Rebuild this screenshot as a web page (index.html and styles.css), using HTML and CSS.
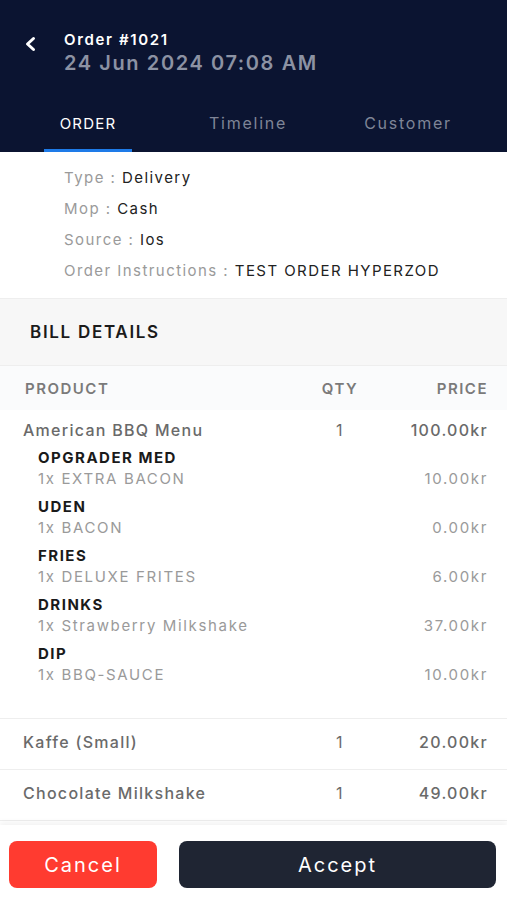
FILE: index.html
```html
<!DOCTYPE html>
<html lang="en">

<head>
    <meta charset="UTF-8">
    <meta name="viewport" content="width=device-width, initial-scale=1.0">
    <title>Order #1021</title>
    <link rel="stylesheet" href="styles.css">
</head>

<body>
    <div class="page">
        <header class="top">
            <div class="title-row">
                <span class="back">
                    <svg width="14" height="16" viewBox="0 0 14 16">
                        <path d="M9.5 2.5 L3.5 8 L9.5 13.5" fill="none" stroke="#fff" stroke-width="3" stroke-linecap="round" stroke-linejoin="round" />
                    </svg>
                </span>
                <div class="titles">
                    <div class="order-no">Order #1021</div>
                    <div class="order-date">24 Jun 2024 07:08 AM</div>
                </div>
            </div>
            <nav class="tabs">
                <div class="tab active"><span>ORDER</span></div>
                <div class="tab"><span>Timeline</span></div>
                <div class="tab"><span>Customer</span></div>
            </nav>
        </header>

        <section class="info">
            <div class="info-row"><span class="lbl">Type : </span>Delivery</div>
            <div class="info-row"><span class="lbl">Mop : </span>Cash</div>
            <div class="info-row"><span class="lbl">Source : </span>Ios</div>
            <div class="info-row"><span class="lbl">Order Instructions : </span>TEST ORDER HYPERZOD</div>
        </section>

        <div class="bill-title">BILL DETAILS</div>

        <div class="bill-head">
            <span>PRODUCT</span>
            <span class="qty">QTY</span>
            <span class="price">PRICE</span>
        </div>

        <div class="item">
            <div class="line">
                <span>American BBQ Menu</span>
                <span class="qty">1</span>
                <span class="price">100.00kr</span>
            </div>
            <div class="addon">
                <div class="addon-name">OPGRADER MED</div>
                <div class="addon-line"><span>1x EXTRA BACON</span><span>10.00kr</span></div>
            </div>
            <div class="addon">
                <div class="addon-name">UDEN</div>
                <div class="addon-line"><span>1x BACON</span><span>0.00kr</span></div>
            </div>
            <div class="addon">
                <div class="addon-name">FRIES</div>
                <div class="addon-line"><span>1x DELUXE FRITES</span><span>6.00kr</span></div>
            </div>
            <div class="addon">
                <div class="addon-name">DRINKS</div>
                <div class="addon-line"><span>1x Strawberry Milkshake</span><span>37.00kr</span></div>
            </div>
            <div class="addon">
                <div class="addon-name">DIP</div>
                <div class="addon-line"><span>1x BBQ-SAUCE</span><span>10.00kr</span></div>
            </div>
        </div>

        <div class="item simple">
            <div class="line">
                <span>Kaffe (Small)</span>
                <span class="qty">1</span>
                <span class="price">20.00kr</span>
            </div>
        </div>

        <div class="item simple">
            <div class="line">
                <span>Chocolate Milkshake</span>
                <span class="qty">1</span>
                <span class="price">49.00kr</span>
            </div>
        </div>

        <footer class="actions">
            <button class="btn cancel">Cancel</button>
            <button class="btn accept">Accept</button>
        </footer>
    </div>
</body>

</html>
```

FILE: styles.css
```css
* {
    padding: 0;
    margin: 0;
    box-sizing: border-box;
}

body {
    font-family: "Inter", "DejaVu Sans", sans-serif;
    background: #fff;
    color: #222;
    letter-spacing: 0.09em;
}

.page {
    width: 507px;
    height: 900px;
    overflow: hidden;
    display: flex;
    flex-direction: column;
}

/* header */
.top {
    background: #0b1431;
    height: 152px;
    padding-top: 30px;
}

.title-row {
    display: flex;
    align-items: flex-start;
    padding-left: 24px;
}

.back {
    width: 40px;
    padding-top: 6px;
}

.order-no {
    color: #fff;
    font-size: 15px;
    font-weight: 600;
    line-height: 20px;
    letter-spacing: 0.11em;
}

.order-date {
    color: #8c92a3;
    font-size: 20px;
    font-weight: 600;
    line-height: 26px;
    letter-spacing: 0.08em;
}

.tabs {
    display: grid;
    grid-template-columns: 160px 160px 160px;
    margin-top: 37px;
    padding-left: 8px;
}

.tab {
    text-align: center;
    font-size: 16px;
    color: #7f8597;
    line-height: 20px;
    letter-spacing: 0.11em;
}

.tab span {
    display: inline-block;
    padding: 0 16px 15px;
    border-bottom: 3px solid transparent;
}

.tab.active span {
    color: #fff;
    font-size: 15px;
    letter-spacing: 0.08em;
    border-bottom-color: #1e7be8;
}

/* info */
.info {
    padding: 10px 0 12px 64px;
}

.info-row {
    font-size: 15px;
    line-height: 31px;
    color: #222;
}

.lbl {
    color: #9a9a9a;
}

.bill-title {
    background: #f7f7f7;
    border-top: 1px solid #eee;
    border-bottom: 1px solid #eee;
    height: 68px;
    display: flex;
    align-items: center;
    padding-left: 30px;
    font-size: 17px;
    font-weight: 600;
    color: #1b1b1b;
    letter-spacing: 0.1em;
}

.bill-head,
.line {
    display: grid;
    grid-template-columns: 1fr 60px 118px;
    align-items: center;
}

.bill-head {
    background: #fafbfc;
    height: 44px;
    padding: 0 19px 0 25px;
    font-size: 15px;
    font-weight: 600;
    color: #7a7a7a;
    letter-spacing: 0.1em;
}

.qty {
    text-align: center;
}

.price {
    text-align: right;
}

.item {
    border-bottom: 1px solid #eeeeee;
    padding: 9px 19px 32px 23px;
}

.line {
    font-size: 16px;
    font-weight: 500;
    color: #6a6a6a;
    line-height: 22px;
    letter-spacing: 0.08em;
}

.line .qty {
    font-weight: 400;
}

.addon {
    padding-left: 15px;
    margin-top: 7px;
}

.addon-name {
    font-size: 15px;
    font-weight: 700;
    color: #1a1a1a;
    line-height: 20px;
    letter-spacing: 0.1em;
}

.addon-line {
    display: flex;
    justify-content: space-between;
    font-size: 15px;
    color: #9a9a9a;
    line-height: 22px;
    letter-spacing: 0.11em;
}

.item.simple {
    padding: 0 19px 4px 23px;
    height: 51px;
    display: flex;
    align-items: center;
}

.item.simple .line {
    width: 100%;
}

.actions {
    margin-top: auto;
    display: flex;
    gap: 22px;
    padding: 16px 11px 12px 9px;
    box-shadow: 0 -3px 6px rgba(0, 0, 0, 0.05);
}

.btn {
    height: 47px;
    border: none;
    border-radius: 8px;
    font-family: inherit;
    font-size: 20px;
    color: #fff;
    letter-spacing: 0.1em;
}

.cancel {
    width: 148px;
    background: #ff3b30;
}

.accept {
    flex: 1;
    background: #1f2533;
}
```
